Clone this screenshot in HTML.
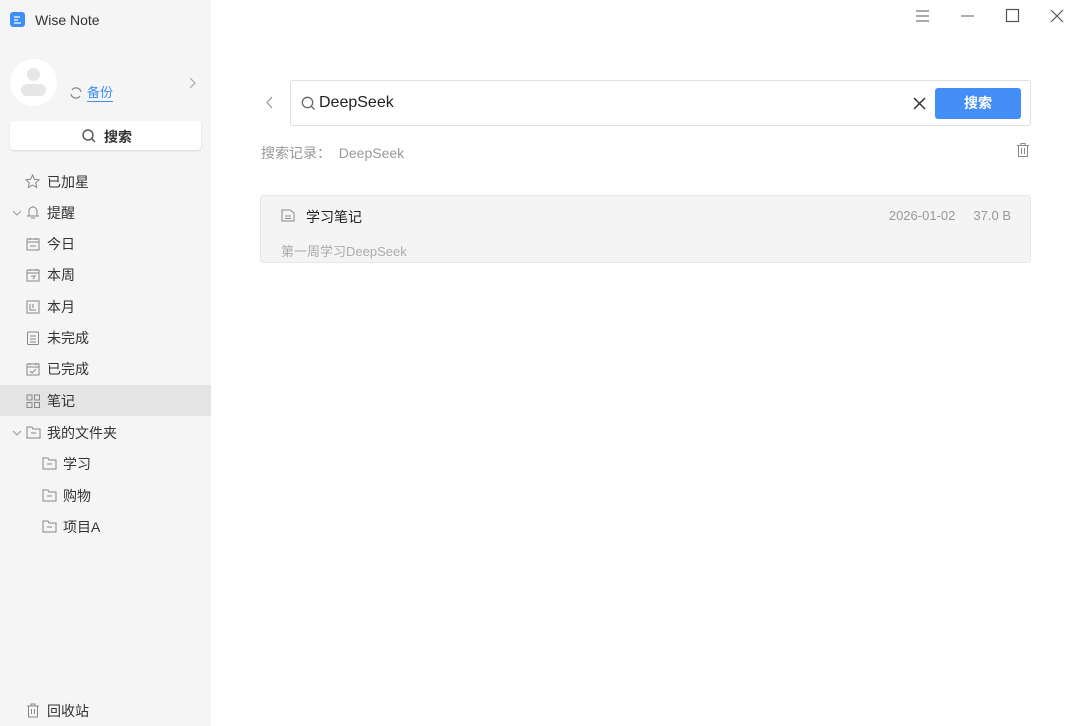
<!DOCTYPE html>
<html><head><meta charset="utf-8"><style>
*{margin:0;padding:0;box-sizing:border-box}
body{width:1080px;height:726px;overflow:hidden;background:#fff;font-family:"Liberation Sans","Noto Sans CJK SC",sans-serif;position:relative;color:#333}
.side{position:absolute;left:0;top:0;width:211px;height:726px;background:#f5f5f5}
.abs{position:absolute}
.item{position:absolute;left:0;width:211px;height:31px;font-size:14px;color:#333;display:flex;align-items:center}
.item svg{position:absolute}
.item span{position:absolute}
svg{overflow:visible}
</style></head><body>
<div class="side">
  <div class="abs" style="left:10px;top:12px;width:15px;height:15px;border-radius:3px;background:#3d8ef5"></div>
  <svg class="abs" style="left:10px;top:12px" width="15" height="15"><path d="M4 5h6M4 8h4M4 11h7" stroke="#fff" stroke-width="1.3" fill="none"/></svg>
  <div class="abs" style="left:35px;top:12px;font-size:14px;color:#333">Wise Note</div>
  <div class="abs" style="left:10px;top:59px;width:47px;height:47px;border-radius:50%;background:#fff"></div>
  <div class="abs" style="left:27px;top:68px;width:13px;height:13px;border-radius:50%;background:#e6e6e6"></div>
  <div class="abs" style="left:21px;top:84px;width:25px;height:12px;border-radius:6px;background:#e6e6e6"></div>
  <svg class="abs" style="left:69px;top:86px" width="14" height="14"><path d="M12 6A5 5 0 0 0 3 4M2 8a5 5 0 0 0 9 2" stroke="#888" stroke-width="1.2" fill="none"/></svg>
  <div class="abs" style="left:87px;top:84px;font-size:13px;color:#3d8ef5;border-bottom:1px solid #3d8ef5;line-height:17px">备份</div>
  <svg class="abs" style="left:189px;top:77px" width="8" height="12"><path d="M1 1l5 5-5 5" stroke="#aaa" stroke-width="1.2" fill="none"/></svg>
  <div class="abs" style="left:10px;top:121px;width:191px;height:29px;background:#fff;border-radius:4px;box-shadow:0 1px 2px rgba(0,0,0,.12)"></div>
  <svg class="abs" style="left:81px;top:128px" width="16" height="16"><circle cx="7" cy="7" r="5" stroke="#555" stroke-width="1.4" fill="none"/><path d="M11 11l3 3" stroke="#555" stroke-width="1.4"/></svg>
  <div class="abs" style="left:104px;top:127px;font-size:14px;font-weight:bold;color:#333">搜索</div>

  <div class="item" style="top:166px"><svg style="left:25px" width="15" height="15"><path d="M7.5 1l2 4.3 4.6.5-3.4 3.1 1 4.6-4.2-2.4-4.2 2.4 1-4.6L1 5.8l4.6-.5z" stroke="#888" fill="none"/></svg><span style="left:47px">已加星</span></div>
  <div class="item" style="top:197px"><svg style="left:12px" width="10" height="6"><path d="M1 1l4 4 4-4" stroke="#999" fill="none"/></svg><svg style="left:26px" width="14" height="15"><path d="M3 11V6a4 4 0 0 1 8 0v5M1 11h12M7 1v1M5 13h4" stroke="#888" fill="none"/></svg><span style="left:47px">提醒</span></div>
  <div class="item" style="top:228px"><svg style="left:26px" width="14" height="14"><rect x="1" y="2" width="12" height="11" stroke="#888" fill="none"/><path d="M1 5h12M4 1v2M10 1v2M4 9h6" stroke="#888"/></svg><span style="left:47px">今日</span></div>
  <div class="item" style="top:259px"><svg style="left:26px" width="14" height="14"><rect x="1" y="2" width="12" height="11" stroke="#888" fill="none"/><path d="M1 5h12M4 1v2M10 1v2M5 8h4l-2 3" stroke="#888" fill="none"/></svg><span style="left:47px">本周</span></div>
  <div class="item" style="top:291px"><svg style="left:26px" width="14" height="14"><rect x="1" y="1" width="12" height="12" stroke="#888" fill="none"/><path d="M4 4v6h6M7 4v4" stroke="#888" fill="none"/></svg><span style="left:47px">本月</span></div>
  <div class="item" style="top:322px"><svg style="left:26px" width="14" height="14"><rect x="1.5" y="1" width="11" height="12.5" rx="1" stroke="#888" fill="none"/><path d="M4 5h6M4 8h6M4 11h6" stroke="#888"/></svg><span style="left:47px">未完成</span></div>
  <div class="item" style="top:353px"><svg style="left:26px" width="14" height="14"><rect x="1" y="2" width="12" height="11" stroke="#888" fill="none"/><path d="M1 5h12M4 1v2M10 1v2M4 9l2 2 4-4" stroke="#888" fill="none"/></svg><span style="left:47px">已完成</span></div>
  <div class="item" style="top:385px;background:#e4e4e4"><svg style="left:26px" width="14" height="14"><rect x="1" y="1" width="5" height="5" stroke="#888" fill="none"/><rect x="8.5" y="1" width="5" height="5" stroke="#888" fill="none"/><rect x="1" y="8.5" width="5" height="5" stroke="#888" fill="none"/><rect x="8.5" y="8.5" width="5" height="5" stroke="#888" fill="none"/></svg><span style="left:47px">笔记</span></div>
  <div class="item" style="top:417px"><svg style="left:12px" width="10" height="6"><path d="M1 1l4 4 4-4" stroke="#999" fill="none"/></svg><svg style="left:26px" width="15" height="13"><path d="M1 1h5l1 2h7v9H1z" stroke="#888" fill="none"/><path d="M5 7h5" stroke="#888"/></svg><span style="left:47px">我的文件夹</span></div>
  <div class="item" style="top:448px"><svg style="left:42px" width="15" height="13"><path d="M1 1h5l1 2h7v9H1z" stroke="#888" fill="none"/><path d="M5 7h5" stroke="#888"/></svg><span style="left:63px">学习</span></div>
  <div class="item" style="top:480px"><svg style="left:42px" width="15" height="13"><path d="M1 1h5l1 2h7v9H1z" stroke="#888" fill="none"/><path d="M5 7h5" stroke="#888"/></svg><span style="left:63px">购物</span></div>
  <div class="item" style="top:511px"><svg style="left:42px" width="15" height="13"><path d="M1 1h5l1 2h7v9H1z" stroke="#888" fill="none"/><path d="M5 7h5" stroke="#888"/></svg><span style="left:63px">项目A</span></div>
  <div class="item" style="top:695px"><svg style="left:26px" width="14" height="15"><path d="M1 3h12M5 3V1h4v2M2.5 3v11h9V3M5.5 6v5M8.5 6v5" stroke="#888" fill="none"/></svg><span style="left:47px">回收站</span></div>
</div>

<svg class="abs" style="left:916px;top:10px" width="13" height="12"><path d="M0 1h13M0 6h13M0 11h13" stroke="#777" stroke-width="1.2"/></svg>
<svg class="abs" style="left:961px;top:15px" width="13" height="2"><path d="M0 1h13" stroke="#777" stroke-width="1.2"/></svg>
<svg class="abs" style="left:1006px;top:9px" width="13" height="13"><rect x=".5" y=".5" width="12" height="12" stroke="#555" stroke-width="1.2" fill="none"/></svg>
<svg class="abs" style="left:1051px;top:10px" width="12" height="12"><path d="M0 0l12 12M12 0L0 12" stroke="#555" stroke-width="1.2"/></svg>

<svg class="abs" style="left:266px;top:96px" width="7" height="13"><path d="M6 1L1 6.5 6 12" stroke="#888" fill="none"/></svg>
<div class="abs" style="left:290px;top:80px;width:741px;height:46px;border:1px solid #dcdfe6;border-radius:3px"></div>
<svg class="abs" style="left:301px;top:96px" width="15" height="15"><circle cx="6.5" cy="6.5" r="5.2" stroke="#666" stroke-width="1.3" fill="none"/><path d="M10.5 10.5l3 3" stroke="#666" stroke-width="1.3"/></svg>
<div class="abs" style="left:319px;top:94px;font-size:16px;color:#222">DeepSeek</div>
<svg class="abs" style="left:913px;top:97px" width="13" height="13"><path d="M1 1l11 11M12 1L1 12" stroke="#333" stroke-width="1.5"/></svg>
<div class="abs" style="left:935px;top:88px;width:86px;height:31px;background:#438ef7;border-radius:3px;color:#fff;font-size:14px;font-weight:bold;text-align:center;line-height:31px">搜索</div>
<div class="abs" style="left:261px;top:143px;font-size:14px;color:#999">搜索记录：&nbsp;&nbsp;DeepSeek</div>
<svg class="abs" style="left:1017px;top:143px" width="12" height="14"><path d="M0 2.5h12M4 2.5V.5h4v2M1.5 2.5v11h9v-11M4.5 5v6M7.5 5v6" stroke="#888" fill="none"/></svg>

<div class="abs" style="left:260px;top:195px;width:771px;height:68px;background:#f4f4f4;border:1px solid #e8e8e8;border-radius:3px"></div>
<svg class="abs" style="left:281px;top:209px" width="14" height="13"><path d="M1 1h8l4 3v8H1z" stroke="#888" fill="none"/><path d="M4 7h6M4 9.5h6" stroke="#888"/></svg>
<div class="abs" style="left:306px;top:207px;font-size:14px;color:#222">学习笔记</div>
<div class="abs" style="right:69px;top:208px;font-size:13px;color:#999;white-space:nowrap">2026-01-02&nbsp;&nbsp;&nbsp;&nbsp;&nbsp;37.0 B</div>
<div class="abs" style="left:281px;top:241px;font-size:13px;color:#aaa">第一周学习DeepSeek</div>
</body></html>
